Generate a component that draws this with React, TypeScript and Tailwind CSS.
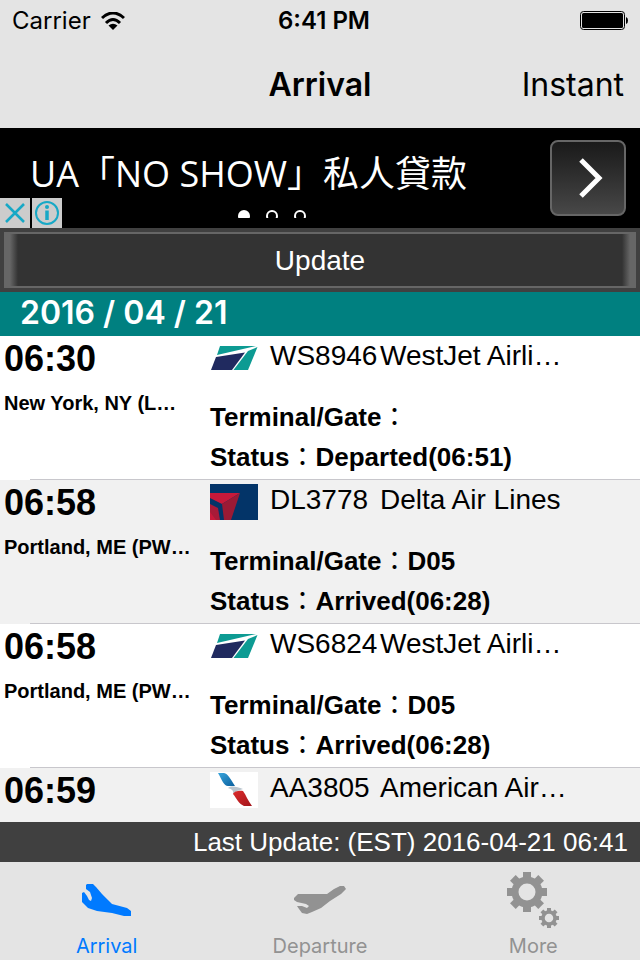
import type { ReactNode } from "react";
import { clsx } from "clsx";

type Airline = "westjet" | "delta" | "american";

interface Flight {
  time: string;
  city?: string;
  airline: Airline;
  code: string;
  name: string;
  details?: { gate: string; status: string };
}

const flights: Flight[] = [
  {
    time: "06:30",
    city: "New York, NY (L…",
    airline: "westjet",
    code: "WS8946",
    name: "WestJet Airli…",
    details: { gate: "", status: "Departed(06:51)" },
  },
  {
    time: "06:58",
    city: "Portland, ME (PW…",
    airline: "delta",
    code: "DL3778",
    name: "Delta Air Lines",
    details: { gate: "D05", status: "Arrived(06:28)" },
  },
  {
    time: "06:58",
    city: "Portland, ME (PW…",
    airline: "westjet",
    code: "WS6824",
    name: "WestJet Airli…",
    details: { gate: "D05", status: "Arrived(06:28)" },
  },
  { time: "06:59", airline: "american", code: "AA3805", name: "American Air…" },
];

function AirlineLogo({ airline }: { airline: Airline }) {
  if (airline === "westjet") {
    return (
      <svg viewBox="0 0 48 36" className="w-12 h-9 shrink-0" aria-hidden="true">
        <path d="M10 6H46L7 15Z" fill="#0d9b93" />
        <path d="M6 17L35 12.500L22 30H1Z" fill="#202a5f" />
        <path d="M47.500 7L38 30H23.500L38 11Z" fill="#0d9b93" />
      </svg>
    );
  }
  if (airline === "delta") {
    return (
      <svg viewBox="0 0 48 36" className="w-12 h-9 shrink-0" aria-hidden="true">
        <path d="M0 0H48V36H0Z" fill="#033468" />
        <path d="M0 9H30L12 20L0 14Z" fill="#c8193a" />
        <path d="M30 9L21 36H14L12 20Z" fill="#9b1a35" />
        <path d="M0 20L8 24L10 36H0Z" fill="#a81a38" />
        <path d="M0 28L6 36H0Z" fill="#c8193a" />
      </svg>
    );
  }
  return (
    <svg viewBox="0 0 48 36" className="w-12 h-9 shrink-0 bg-white" aria-hidden="true">
      <defs>
        <linearGradient id="aa-blue" x1="0" y1="0" x2="1" y2="1">
          <stop offset="0" stopColor="#39a5dc" />
          <stop offset="1" stopColor="#0a5f9e" />
        </linearGradient>
        <linearGradient id="aa-red" x1="0" y1="0" x2="1" y2="1">
          <stop offset="0" stopColor="#dc2b2b" />
          <stop offset="1" stopColor="#a3151b" />
        </linearGradient>
      </defs>
      <path d="M8 1H14C18 2 20 6 25 14L18 14C14 14 12 8 8 1Z" fill="url(#aa-blue)" />
      <path d="M18 16C22 13 27 15 33 17L27 19L23 22C24 18 21 17 18 16Z" fill="#b9c4cd" />
      <path d="M23 22C24 19 30 18 33 19C36 23 38 29 42 34H34C29 32 27 27 23 22Z" fill="url(#aa-red)" />
    </svg>
  );
}

function StatusBar() {
  return (
    <div className="h-10 px-3 pt-0.5 grid grid-cols-3 items-center font-[Inter,sans-serif] text-2xl">
      <div className="flex items-center gap-2.5">
        <span>Carrier</span>
        <svg viewBox="0 0 24 18" className="w-6 h-[18px]" fill="none" stroke="currentColor" aria-hidden="true">
          <path d="M1 6Q12 -4 23 6" strokeWidth="3" />
          <path d="M5 11Q12 4 19 11" strokeWidth="3" />
          <path d="M7.500 13.500Q12 10 16.500 13.500L12 18Z" fill="currentColor" stroke="none" />
        </svg>
      </div>
      <span className="text-center font-semibold whitespace-nowrap pl-2">6:41 PM</span>
      <svg viewBox="0 0 48 20" className="w-12 h-5 justify-self-end" aria-hidden="true">
        <rect x="0.500" y="0.500" width="44" height="18" rx="3" fill="none" stroke="#000" />
        <rect x="2" y="2" width="41" height="15" rx="1.500" />
        <path d="M46 6Q48 6.500 48 9.500T46 13Z" />
      </svg>
    </div>
  );
}

function AdBanner() {
  return (
    <div className="relative h-[100px] bg-black text-white flex items-center justify-between pl-[30px] pr-3.5">
      <a href="#ad" className="pb-2 text-4xl font-normal whitespace-nowrap font-['Open_Sans','Noto_Sans_CJK_TC',sans-serif]">
        UA「NO SHOW」私人貸款
      </a>
      <button
        aria-label="Open ad"
        className="size-[76px] rounded-lg border-2 border-[#666] bg-linear-to-b from-[#1a1a1a] to-[#484848] flex items-center justify-center"
      >
        <svg viewBox="0 0 28 40" className="ml-1.5 w-7 h-10" fill="none" stroke="#fff" strokeWidth="5" aria-hidden="true">
          <path d="M4 2L22 20L4 38" />
        </svg>
      </button>
      <div className="absolute left-0 bottom-0 flex gap-0.5">
        <button aria-label="Close ad" className="size-[30px] bg-[#ccc] flex items-center justify-center">
          <svg viewBox="0 0 20 20" className="size-5" stroke="#17a8c6" strokeWidth="2.500" aria-hidden="true">
            <path d="M1 1L19 19M19 1L1 19" />
          </svg>
        </button>
        <button aria-label="Ad info" className="size-[30px] bg-[#ccc] flex items-center justify-center">
          <svg viewBox="0 0 26 26" className="size-[26px]" fill="none" stroke="#17a8c6" aria-hidden="true">
            <circle cx="13" cy="13" r="11" strokeWidth="2" />
            <path d="M13 10.500V20" strokeWidth="3.500" />
            <circle cx="13" cy="7" r="2" fill="#17a8c6" stroke="none" />
          </svg>
        </button>
      </div>
      <svg viewBox="0 0 70 8" className="absolute bottom-2.5 left-[237px] w-[70px] h-2" fill="none" stroke="#fff" strokeWidth="2" aria-hidden="true">
        <circle cx="7" cy="6" r="5" fill="#fff" />
        <circle cx="35" cy="6" r="5" />
        <circle cx="63" cy="6" r="5" />
      </svg>
    </div>
  );
}

function FlightRow({ flight, shaded }: { flight: Flight; shaded: boolean }) {
  return (
    <li className={clsx("flex flex-col", flight.details ? "h-36 shrink-0" : "flex-1", shaded ? "bg-[#f1f1f1]" : "bg-white")}>
      <div className="flex-1 flex pl-1">
        <div className="w-[206px] shrink-0 font-bold">
          <p className="pt-[3px] text-4xl leading-10">{flight.time}</p>
          {flight.city && <p className="pt-2.5 text-xl leading-7 whitespace-nowrap">{flight.city}</p>}
        </div>
        <div className="flex-1">
          <div className="h-10 flex items-center text-[28px] whitespace-nowrap">
            <span className="pt-1">
              <AirlineLogo airline={flight.airline} />
            </span>
            <span className="w-[110px] ml-3">{flight.code}</span>
            <span>{flight.name}</span>
          </div>
          {flight.details && (
            <div className="pt-[21px] text-[26px] leading-10 font-bold whitespace-nowrap">
              <p>
                Terminal/Gate<span className="font-normal">：</span>
                {flight.details.gate}
              </p>
              <p>
                Status<span className="font-normal">：</span>
                {flight.details.status}
              </p>
            </div>
          )}
        </div>
      </div>
      {flight.details && <div className="h-px ml-[30px] bg-[#c8c7cc]" />}
    </li>
  );
}

function ArrivalIcon() {
  return (
    <svg viewBox="0 0 50 32" className="w-[50px] h-8" fill="currentColor" aria-hidden="true">
      <path d="M4 1L5 0H11L14 3L20 10L26 16L30 20L45 24L49 27V32H42L30 29L15 27L6 24L2 20L0 18V9L2 8L5 12L7 16L9 17L10 14L8 8L4 5Z" />
    </svg>
  );
}

function DepartureIcon() {
  return (
    <svg viewBox="0 0 52 28" className="w-[52px] h-7" fill="currentColor" aria-hidden="true">
      <path d="M46 0H50L52 3L47 8L36 15L27 22L18 26L13 28L8 27L5 23L3 20L8 20L13 22L15 20L12 18L3 16L0 14V12L4 8L33 8L40 3Z" />
    </svg>
  );
}

function Gear({ x, y, size }: { x: number; y: number; size: number }) {
  return (
    <g transform={`translate(${x} ${y}) scale(${size})`}>
      <circle r="12" fill="none" stroke="currentColor" strokeWidth="7" />
      {[0, 45, 90, 135, 180, 225, 270, 315].map((angle) => (
        <rect key={angle} x="-4" y="-20" width="8" height="8" fill="currentColor" transform={`rotate(${angle})`} />
      ))}
    </g>
  );
}

function MoreIcon() {
  return (
    <svg viewBox="0 0 52 56" className="w-[52px] h-14" aria-hidden="true">
      <Gear x={20} y={20} size={1} />
      <Gear x={42} y={46} size={0.5} />
    </svg>
  );
}

function Tab({ label, icon, active }: { label: string; icon: ReactNode; active?: boolean }) {
  return (
    <button
      aria-current={active ? "page" : undefined}
      className={clsx("flex flex-col items-center font-[Inter,sans-serif] text-xl", active ? "text-[#007aff]" : "text-[#929292]")}
    >
      <span className="h-[70px] pt-1.5 flex items-center justify-center">{icon}</span>
      <span className="leading-7">{label}</span>
    </button>
  );
}

export default function App() {
  return (
    <div className="h-screen flex flex-col overflow-hidden bg-white text-black font-['Liberation_Sans','Noto_Sans_CJK_TC',sans-serif]">
      <header className="shrink-0 bg-[#e4e4e4] font-[Inter,sans-serif]">
        <StatusBar />
        <div className="h-[88px] px-4 pt-0.5 grid grid-cols-3 items-center text-[32px]">
          <h1 className="col-start-2 text-center font-semibold">Arrival</h1>
          <button className="justify-self-end">Instant</button>
        </div>
      </header>

      <div className="shrink-0">
        <AdBanner />
      </div>

      <div className="shrink-0 h-16 p-1 bg-[#404040] flex">
        <button className="flex-1 pt-0.5 border-y-2 border-[#666] bg-[linear-gradient(to_right,#666_0,#666_6px,#333_14px,#333_calc(100%-14px),#666_calc(100%-6px))] text-white text-[28px]">
          Update
        </button>
      </div>

      <h2 className="shrink-0 h-11 pl-5 bg-[#008080] text-white text-[32px] leading-[42px] font-semibold font-[Inter,sans-serif]">
        2016 / 04 / 21
      </h2>

      <ul className="flex-1 min-h-0 overflow-hidden flex flex-col">
        {flights.map((flight, index) => (
          <FlightRow key={flight.code} flight={flight} shaded={index % 2 === 1} />
        ))}
      </ul>

      <p className="shrink-0 h-10 pr-3 bg-[#404040] text-white text-[26px] leading-10 text-right whitespace-nowrap">
        Last Update: (EST) 2016-04-21 06:41
      </p>

      <nav className="shrink-0 h-[98px] bg-[#e4e4e4] grid grid-cols-3">
        <Tab label="Arrival" icon={<ArrivalIcon />} active />
        <Tab label="Departure" icon={<DepartureIcon />} />
        <Tab label="More" icon={<MoreIcon />} />
      </nav>
    </div>
  );
}
